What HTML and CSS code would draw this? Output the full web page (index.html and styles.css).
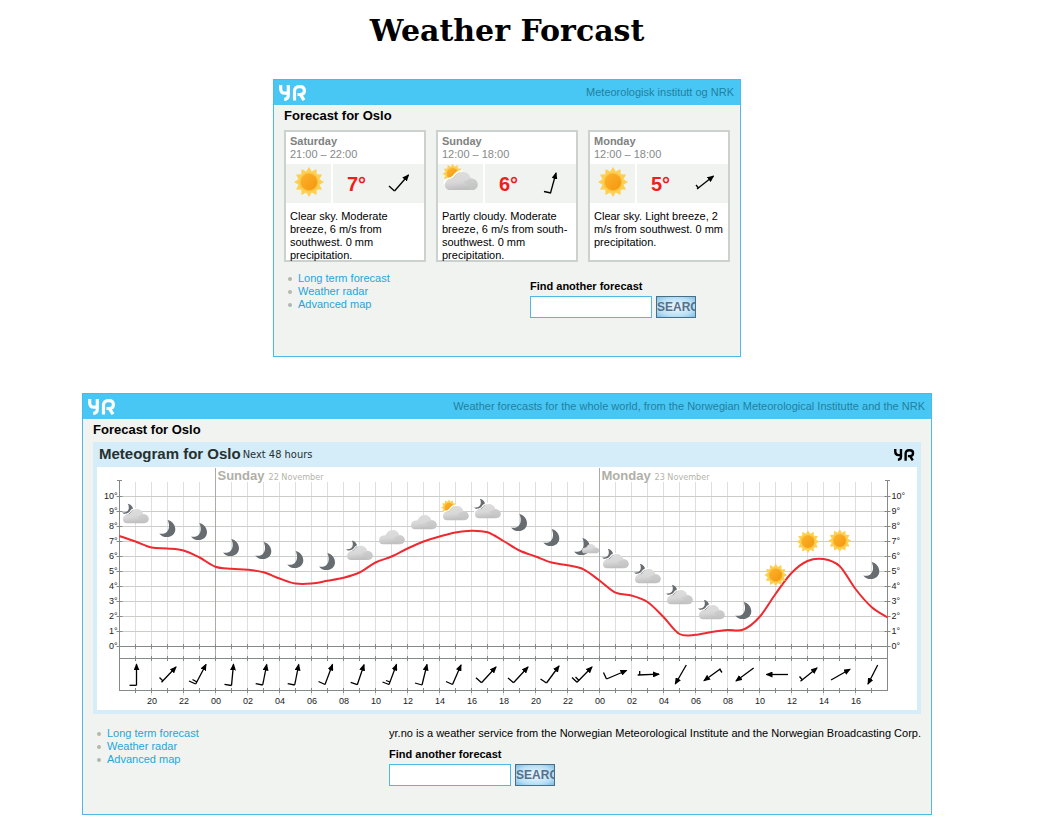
FILE: index.html
```html
<!DOCTYPE html>
<html lang="en">
<head>
<meta charset="utf-8">
<title>Weather Forcast</title>
<link rel="stylesheet" href="styles.css">
</head>
<body>
<svg class="defs" aria-hidden="true">
  <defs>
    <linearGradient id="cloud-fill" x1="0" y1="0" x2="0.2" y2="1">
      <stop offset="0" stop-color="#dedede"/><stop offset="0.6" stop-color="#d8d8d8"/><stop offset="1" stop-color="#c0c0c0"/>
    </linearGradient>
    <linearGradient id="sun-fill" x1="0" y1="0" x2="1" y2="1">
      <stop offset="0" stop-color="#fcb32c"/><stop offset="1" stop-color="#f4960e"/>
    </linearGradient>
    <g id="sun">
      <polygon fill="#fcd052" points="0,-15 2.8,-10.5 7.5,-13 7.7,-7.7 13,-7.5 10.5,-2.8 15,0 10.5,2.8 13,7.5 7.7,7.7 7.5,13 2.8,10.5 0,15 -2.8,10.5 -7.5,13 -7.7,7.7 -13,7.5 -10.5,2.8 -15,0 -10.5,-2.8 -13,-7.5 -7.7,-7.7 -7.5,-13 -2.8,-10.5"/>
      <circle r="9.2" fill="#fbc03c"/>
      <circle r="8.2" fill="url(#sun-fill)"/>
    </g>
    <path id="moon" fill="#666c70" d="M8.3 0C13 1.2 16 5 16 9.2C16 14 12.2 17 7.6 17C4.4 17 1.5 15.8 0 13.4C2.3 14.2 5.2 13.8 7.2 12.2C10.4 9.6 10.4 4 8.3 0Z"/>
    <g id="cloud">
      <path fill="url(#cloud-fill)" d="M4.2 14.2C1.6 14.2 0 12.7 0 10.2C0 7.7 1.8 6 4.2 5.6C6 5.4 6.6 5 7.6 3.4C9 1.1 11 0 13.6 0C17.2 0 19.6 2 20.4 5.2C23.6 5.2 25.7 7.2 25.7 9.8C25.7 12.5 23.8 14.2 21 14.2Z"/>
      <path fill="#c6c6c6" opacity=".6" d="M20.4 5.2C17.4 6.4 16.6 7.4 14.8 7.5C15.4 9.3 18.8 9.2 18.4 13.2L21 14.2C24.3 14 25.7 12 25.7 9.8C25.4 6.8 23.3 5.2 20.4 5.2Z"/>
    </g>
    <g id="sun-cloud">
      <use href="#sun" transform="translate(6 1.4) scale(.53)"/>
      <path fill="none" stroke="#fff" stroke-width="1.4" d="M-.7 9.5C-.5 7 1.5 5.2 4 4.9C5.8 4.6 6 4.4 6.9 3C8.3 .7 10.6 -.7 13.3 -.7"/>
      <use href="#cloud"/>
    </g>
    <g id="moon-cloud">
      <use href="#moon" transform="translate(-1 -5.3) scale(.7 .64)"/>
      <path fill="none" stroke="#fff" stroke-width="1.2" d="M-.6 9.5C-.5 7 1.5 5.2 4 4.9C5.8 4.6 6 4.4 6.9 3C8.3 .7 10.6 -.7 13.3 -.7"/>
      <use href="#cloud"/>
    </g>
    <g id="yr" fill="none" stroke="currentColor" stroke-width="3.2" stroke-linejoin="round">
      <path d="M1.7 0V3.4C1.7 6.6 3.2 8.2 6 8.2H9.2M9.3 0V10C9.3 12.600 8 14.2 5.200 14.300"/>
      <path d="M15.500 15.500V6.200C15.500 3.300 17.200 1.700 20 1.700H21C23.800 1.700 25.400 3.200 25.400 5.700C25.400 8.200 23.800 9.500 21 9.500H18.500M21.500 9.600L25 15.200"/>
    </g>
    <marker id="head" viewBox="0 0 7 6" refX="6" refY="3" markerWidth="7" markerHeight="6" markerUnits="userSpaceOnUse" orient="auto">
      <path d="M0 0L7 3L0 6Z"/>
    </marker>
  </defs>
</svg>

<h1 class="page-title">Weather Forcast</h1>

<section class="widget widget-small">
  <header class="bar">
    <svg class="logo" viewBox="0 0 28 16" role="img" aria-label="YR"><use href="#yr"/></svg>
    <span>Meteorologisk institutt og NRK</span>
  </header>
  <div class="content">
    <h2>Forecast for Oslo</h2>
    <div class="cards">
      <article class="card">
        <h3>Saturday</h3><p class="time">21:00 – 22:00</p>
        <div class="strip">
          <div class="sky"><svg viewBox="0 0 45 39"><use href="#sun" x="23" y="18"/></svg></div>
          <div class="reading"><strong>7°</strong>
            <svg class="wind" viewBox="0 0 24 24"><path marker-end="url(#head)" d="M6.500 19L20.500 3"/><path d="M6.500 19L1 14"/></svg></div>
        </div>
        <p class="text">Clear sky. Moderate breeze, 6 m/s from southwest. 0 mm precipitation.</p>
      </article>
      <article class="card">
        <h3>Sunday</h3><p class="time">12:00 – 18:00</p>
        <div class="strip">
          <div class="sky"><svg viewBox="0 0 45 39"><use href="#sun-cloud" transform="translate(7 8) scale(1.27)"/></svg></div>
          <div class="reading"><strong>6°</strong>
            <svg class="wind" viewBox="0 0 24 24"><path marker-end="url(#head)" d="M10.500 21L16 1"/><path d="M11 21L4 19.500"/></svg></div>
        </div>
        <p class="text">Partly cloudy. Moderate breeze, 6 m/s from south-southwest. 0 mm precipitation.</p>
      </article>
      <article class="card">
        <h3>Monday</h3><p class="time">12:00 – 18:00</p>
        <div class="strip">
          <div class="sky"><svg viewBox="0 0 45 39"><use href="#sun" x="23" y="18"/></svg></div>
          <div class="reading"><strong>5°</strong>
            <svg class="wind" viewBox="0 0 24 24"><path marker-end="url(#head)" d="M5 17L21.500 4"/><path d="M6.500 16L4 13"/></svg></div>
        </div>
        <p class="text">Clear sky. Light breeze, 2 m/s from southwest. 0 mm precipitation.</p>
      </article>
    </div>
    <div class="foot">
      <ul class="links">
        <li><a href="#">Long term forecast</a></li>
        <li><a href="#">Weather radar</a></li>
        <li><a href="#">Advanced map</a></li>
      </ul>
      <form class="search">
        <label for="place-a">Find another forecast</label>
        <div class="row"><input id="place-a" type="text"><button type="button">SEARCH</button></div>
      </form>
    </div>
  </div>
</section>

<section class="widget widget-large">
  <header class="bar">
    <svg class="logo" viewBox="0 0 28 16" role="img" aria-label="YR"><use href="#yr"/></svg>
    <span>Weather forecasts for the whole world, from the Norwegian Meteorological Institutte and the NRK</span>
  </header>
  <div class="content">
    <h2>Forecast for Oslo</h2>
    <div class="meteogram">
      <div class="meteogram-head">
        <h3>Meteogram for Oslo</h3><span>Next 48 hours</span>
        <svg class="logo-dark" viewBox="0 0 28 16" role="img" aria-label="YR"><use href="#yr"/></svg>
      </div>
      <svg class="chart" id="chart" viewBox="0 0 820 243"></svg>
    </div>
    <div class="foot">
      <ul class="links">
        <li><a href="#">Long term forecast</a></li>
        <li><a href="#">Weather radar</a></li>
        <li><a href="#">Advanced map</a></li>
      </ul>
      <form class="search">
        <p>yr.no is a weather service from the Norwegian Meteorological Institute and the Norwegian Broadcasting Corp.</p>
        <label for="place-b">Find another forecast</label>
        <div class="row"><input id="place-b" type="text"><button type="button">SEARCH</button></div>
      </form>
    </div>
  </div>
</section>
<script src="chart.js"></script>
</body>
</html>
```
FILE: styles.css
```css
* { box-sizing: border-box; }
body {
  margin: 0;
  padding: 11px 42px 16px 8px;
  background: #fff;
  color: #000;
  font: 11px/13px "Liberation Sans", Arial, sans-serif;
}
h1, h2, h3, p, ul { margin: 0; padding: 0; }
.defs { position: absolute; width: 0; height: 0; }
.page-title {
  margin-bottom: 28px;
  text-align: center;
  font: bold 30px/40px "DejaVu Serif", serif;
}
.widget {
  margin: 0 auto 36px;
  border: 1px solid #4db9e4;
  background: #f1f3f0;
}
.widget-small { max-width: 468px; }
.widget-large { max-width: 850px; margin-bottom: 0; }
.bar {
  display: flex;
  align-items: center;
  justify-content: space-between;
  height: 26px;
  padding: 0 6px 0 5px;
  background: #48c7f5;
  border-bottom: 1px solid #fff;
  color: #237f9e;
}
.logo { width: 28px; height: 16px; color: #fff; }
.content { padding: 2px 10px 28px; }
.content h2 { font-size: 13px; line-height: 15px; margin-bottom: 7px; }

.cards {
  display: grid;
  grid-template-columns: repeat(3, 1fr);
  gap: 10px;
}
.card {
  height: 132px;
  border: 2px solid #cbd1cc;
  background: #fff;
}
.card h3, .time { padding-left: 4px; font-size: 11px; line-height: 13px; color: #868a88; }
.card h3 { padding-top: 3px; color: #7e8280; }
.strip { display: flex; gap: 2px; height: 39px; margin-top: 3px; }
.sky { width: 45px; background: #f1f3f0; }
.sky svg { display: block; width: 45px; height: 39px; }
.reading {
  flex: 1;
  display: flex;
  align-items: center;
  justify-content: space-between;
  padding: 0 12px 0 14px;
  background: #f1f3f0;
}
.reading strong { font-size: 20px; line-height: 24px; color: #f11c1c; }
.wind { width: 24px; height: 24px; fill: none; stroke: #000; stroke-width: 1.3; }
#head path { fill: #000; stroke: none; }
.text { padding: 7px 0 0 4px; }

.foot { display: flex; justify-content: space-between; padding-top: 10px; }
.links { list-style: none; }
.links li { display: flex; align-items: center; gap: 6px; padding-left: 4px; }
.links li::before {
  content: "";
  width: 4px;
  height: 4px;
  border-radius: 50%;
  background: #b4b8ab;
}
.links a { color: #1ea6dc; text-decoration: none; }
.search label { display: block; margin-bottom: 3px; font-weight: bold; }
.widget-small .search { width: 200px; padding: 8px 0 10px; }
.search p { margin-bottom: 8px; }
.row { display: flex; gap: 4px; }
.row input {
  width: 122px;
  height: 22px;
  border: 1px solid #4db9e4;
  background: #fff;
}
.row button {
  width: 40px;
  height: 22px;
  padding: 0;
  overflow: hidden;
  border: 1px solid #4a6f84;
  background: radial-gradient(ellipse at center, #e2f2fc 20%, #b8e0f6 65%, #7fbce4 100%);
  color: #56708a;
  font: bold 12px/20px "Liberation Sans", Arial, sans-serif;
  text-align: left;
}
.widget-small .content { min-height: 250px; }

.meteogram { padding: 0 4px 4px; background: #d5edf9; }
.meteogram-head {
  display: flex;
  align-items: center;
  gap: 2px;
  height: 25px;
  padding: 0 2px;
  color: #26302f;
}
.meteogram-head h3 { font-size: 15px; line-height: 20px; padding-bottom: 2px; }
.meteogram-head span { font: 11px/16px "DejaVu Sans Condensed", "DejaVu Sans", sans-serif; font-stretch: normal; }
.logo-dark { width: 21px; height: 12px; margin-left: auto; color: #000; }
.chart { display: block; width: 100%; background: #fff; }
.widget-large .content h2 { margin-bottom: 5px; }
.widget-large .foot { padding-top: 13px; }

.grid-h { stroke: #cbcdc9; }
.grid-v { stroke: #dedede; }
.day-line { stroke: #a9aca5; }
.axis { stroke: #858a87; }
.chart text { font-size: 9px; fill: #1b2222; }
.chart .day { font-size: 13px; font-weight: bold; fill: #afafa7; }
.chart .date { font-family: "DejaVu Sans Condensed", "DejaVu Sans", sans-serif; fill: #b4b4aa; }
.chart .end { text-anchor: end; }
.chart .mid { text-anchor: middle; }
.temp { fill: none; stroke: #ee2a30; stroke-width: 2; }
.arrow { fill: none; stroke: #000; stroke-width: 1.3; }
```
FILE: chart.js
```js
const LEFT = 22.5, STEP = 16, HOURS = 48, ZERO = 179.5, DEG = 15;
const RIGHT = LEFT + STEP * HOURS, PANEL = 191.5, BOTTOM = 223.5;

const temps = [
  69, 74.5, 80.5, 81.5, 83.5, 90.5, 99.7, 101.7, 102.7, 105.3, 111.5, 116.5,
  116.5, 113.8, 110.8, 105.5, 95.5, 89.5, 81.5, 74.5, 69.5, 65.5, 63.7, 65.3,
  74, 83.5, 89.5, 95.5, 98.3, 102.3, 113.5, 125.7, 128.5, 135, 150, 167, 167.8,
  165, 163, 162.5, 150, 127, 106, 94, 92, 99, 122, 140, 150.5
];

// symbol, x, y
const symbols = [
  ["moon-cloud", 26, 42], ["moon", 62.3, 53], ["moon", 94, 56], ["moon", 126, 72],
  ["moon", 158.3, 75], ["moon", 190.3, 84], ["moon", 222, 86], ["moon-cloud", 250, 78.7],
  ["cloud", 282, 63], ["cloud", 314, 48], ["sun-cloud", 346, 39], ["moon-cloud", 378, 37],
  ["moon", 414, 47], ["moon", 446.3, 62], ["moon", 477, 71], ["moon-cloud", 506, 87],
  ["moon-cloud", 538, 102], ["moon-cloud", 570, 123], ["moon-cloud", 602, 138],
  ["moon", 638.3, 135], ["sun", 678.7, 108], ["sun", 711, 74.7], ["sun", 742.7, 73.7],
  ["moon", 766.3, 95]
];

// tail x, y, head x, y, then barb segments
const winds = [
  [39.5, 218.3, 39.5, 197.3, [39.5, 218.3, 32.5, 218.3]],
  [64.5, 215.3, 79, 200, [66, 214, 62.5, 210.5]],
  [98.7, 217, 109, 197.5, [98.7, 217, 92, 214], [100, 215, 95.5, 212.5]],
  [134.5, 218.5, 136.5, 197.3, [134.5, 218.5, 127.5, 217.3]],
  [165.7, 218, 169.7, 197.5, [165.7, 218, 158.7, 216.7]],
  [197.7, 218, 201.7, 197.5, [197.7, 218, 190.7, 216.7]],
  [228, 217.5, 235.5, 197.5, [228, 217.5, 221.5, 214.5]],
  [260.3, 217.7, 267, 197.7, [260.3, 217.7, 253.7, 215.3]],
  [292, 217.5, 299.5, 197.5, [292, 217.5, 285.5, 215], [293, 215, 289, 213.5]],
  [325, 218, 330, 197.5, [325, 218, 318, 216]],
  [355.5, 217.5, 364, 198, [355.5, 217.5, 349, 214.5]],
  [384.5, 215.7, 399, 200, [384.5, 215.7, 379, 210.7]],
  [416.5, 215.7, 431, 200, [416.5, 215.7, 411, 211]],
  [449.5, 216, 462, 199, [449.5, 216, 443.5, 212]],
  [480, 215.3, 495, 200, [480, 215.3, 475, 210.5], [482, 213.5, 478.5, 210]],
  [509.5, 212, 529.5, 203.5, [509.5, 212, 506.5, 205.5]],
  [540.7, 208, 562, 207.2, [542.7, 208, 542.7, 204]],
  [589.3, 198, 578.3, 217],
  [623.5, 201.7, 607, 213.7, [622.5, 202, 625, 205.5]],
  [656.7, 201, 639, 214],
  [691, 207.5, 669.5, 207.5],
  [703.5, 214.3, 720, 201, [705.5, 213, 702.5, 209.5]],
  [734, 213, 753, 202.3],
  [780.7, 198, 771, 217]
];

const out = [];
const line = (x1, y1, x2, y2, cls) =>
  out.push(`<line x1="${x1}" y1="${y1}" x2="${x2}" y2="${y2}" class="${cls}"/>`);
const text = (x, y, cls, s) => out.push(`<text x="${x}" y="${y}" class="${cls}">${s}</text>`);

for (let i = 1; i < HOURS; i++) {
  line(LEFT + i * STEP, 15, LEFT + i * STEP, PANEL, "grid-v");
  if (i % 2 === 0) line(LEFT + i * STEP, PANEL, LEFT + i * STEP, BOTTOM + 5, "grid-v");
}
for (let d = 1; d <= 10; d++) line(LEFT, ZERO - d * DEG, RIGHT, ZERO - d * DEG, "grid-h");
for (const [hour, day, date, dx] of [[6, "Sunday", "22 November", 53], [30, "Monday", "23 November", 55]]) {
  const x = LEFT + hour * STEP;
  line(x, 1, x, PANEL, "day-line");
  out.push(`<rect x="${x + 1}" y="2" width="110" height="13" fill="#fff"/>`);
  text(x + 2, 13, "day", day);
  text(x + dx, 13, "date", date);
}
for (const y of [ZERO, PANEL, BOTTOM]) {
  line(LEFT, y, RIGHT, y, "axis");
  for (let i = 1; i < HOURS; i++) line(LEFT + i * STEP, y - 2.5, LEFT + i * STEP, y + 2.5, "axis");
}
for (const x of [LEFT, RIGHT]) {
  line(x, 13, x, BOTTOM + .5, "axis");
  line(x - 2.5, 13.5, x + 2.5, 13.5, "axis");
  for (let d = 0; d <= 10; d++) line(x - 3, ZERO - d * DEG, x + 3, ZERO - d * DEG, "axis");
}
for (let d = 0; d <= 10; d++) {
  text(LEFT - 2, ZERO - d * DEG + 2.5, "end", d + "°");
  text(RIGHT + 4, ZERO - d * DEG + 2.5, "", d + "°");
}
for (let i = 2; i < HOURS; i += 2)
  text(LEFT + i * STEP + .5, 236.5, "mid", String((18 + i) % 24).padStart(2, "0"));

const pts = temps.map((y, i) => [LEFT + i * STEP, y]);
let path = "M" + pts[0];
for (let i = 0; i < HOURS; i++) {
  const a = pts[Math.max(i - 1, 0)], b = pts[i], c = pts[i + 1], e = pts[Math.min(i + 2, HOURS)];
  path += `C${b[0] + (c[0] - a[0]) / 6} ${b[1] + (c[1] - a[1]) / 6} ${c[0] - (e[0] - b[0]) / 6} ${c[1] - (e[1] - b[1]) / 6} ${c}`;
}
out.push(`<path class="temp" d="${path}"/>`);

for (const [id, x, y] of symbols)
  out.push(`<use href="#${id}" transform="translate(${x} ${y})${id === "sun" ? " scale(.76)" : ""}"/>`);
out.push('<use href="#cloud" transform="translate(485 77) scale(.66)"/>');

for (const [x1, y1, x2, y2, ...barbs] of winds) {
  out.push(`<path class="arrow" marker-end="url(#head)" d="M${x1} ${y1}L${x2} ${y2}"/>`);
  for (const b of barbs) line(...b, "arrow");
}
document.getElementById("chart").innerHTML = out.join("");
```
